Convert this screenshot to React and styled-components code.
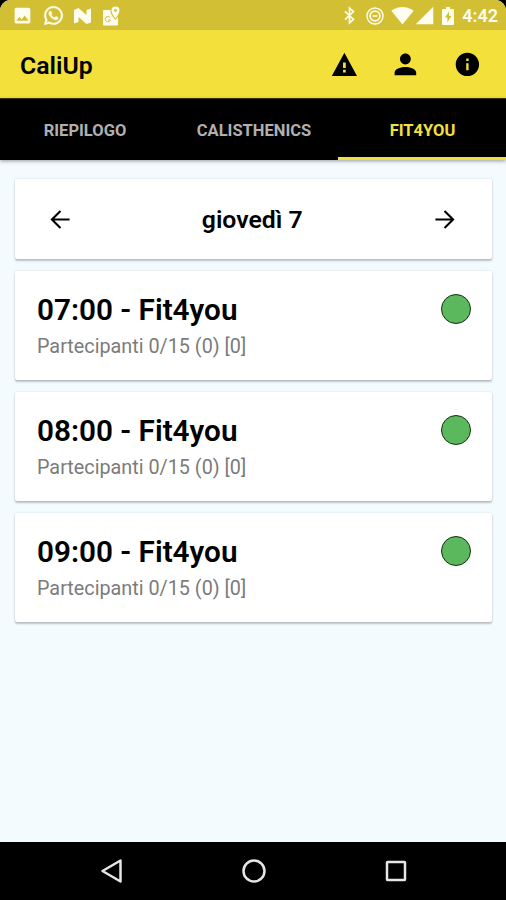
import styled, { createGlobalStyle } from "styled-components";
import {
  IoMdInformationCircle,
  IoMdPerson,
  IoMdWarning,
} from "react-icons/io";
import {
  MdImage,
  MdSignalCellular4Bar,
  MdSignalWifi4Bar,
} from "react-icons/md";
import { FaWhatsapp } from "react-icons/fa";

const tabs = ["Riepilogo", "Calisthenics", "Fit4you"];

const lessons = [
  { time: "07:00", name: "Fit4you", info: "0/15 (0) [0]" },
  { time: "08:00", name: "Fit4you", info: "0/15 (0) [0]" },
  { time: "09:00", name: "Fit4you", info: "0/15 (0) [0]" },
];

export default function App() {
  return (
    <Frame>
      <GlobalStyle />
      <Screen>
        <StatusBar>
          <StatusGroup $gap="9.5px">
            <MdImage size={21} />
            <ChatIcon />
            <NougatIcon />
            <MapsIcon />
          </StatusGroup>
          <StatusGroup $gap="7px">
            <BluetoothIcon />
            <DataSaverIcon />
            <SignalIcons>
              <MdSignalWifi4Bar size={23} />
              <MdSignalCellular4Bar size={21} />
            </SignalIcons>
            <BatteryIcon />
            <Clock>4:42</Clock>
          </StatusGroup>
        </StatusBar>
        <Header>
          <Title>CaliUp</Title>
          <HeaderActions>
            <IoMdWarning />
            <IoMdPerson />
            <IoMdInformationCircle />
          </HeaderActions>
        </Header>
        <Tabs>
          {tabs.map((tab) => (
            <Tab key={tab} $active={tab === "Fit4you"}>
              {tab}
            </Tab>
          ))}
        </Tabs>
        <Content>
          <DayCard>
            <ArrowIcon viewBox="0 0 22 22">
              <path d="M20.5 11H2.5M11 2 2 11l9 9" />
            </ArrowIcon>
            <Day>giovedì 7</Day>
            <ArrowIcon viewBox="0 0 22 22">
              <path d="M1.5 11h18M11 2l9 9-9 9" />
            </ArrowIcon>
          </DayCard>
          {lessons.map((lesson) => (
            <LessonCard key={lesson.time}>
              <div>
                <LessonTitle>
                  {lesson.time} - {lesson.name}
                </LessonTitle>
                <LessonInfo>Partecipanti {lesson.info}</LessonInfo>
              </div>
              <Dot />
            </LessonCard>
          ))}
        </Content>
      </Screen>
      <NavBar>
        <svg width="24" height="28" viewBox="0 0 24 28">
          <path d="M20.5 3.5v21L2.5 14z" />
        </svg>
        <svg width="28" height="28" viewBox="0 0 28 28">
          <circle cx="14" cy="14" r="10.5" />
        </svg>
        <svg width="24" height="28" viewBox="0 0 24 28">
          <rect x="3" y="5" width="18" height="18" rx="0.5" />
        </svg>
      </NavBar>
    </Frame>
  );
}

function NougatIcon() {
  return (
    <svg width="19" height="16" viewBox="0 0 19 16" fill="currentColor">
      <path d="M1 2 5.5 0l8 7V2L18 .5v14L13.5 16l-8-7v5L1 15.5z" />
    </svg>
  );
}

function MapsIcon() {
  return (
    <svg width="18" height="20" viewBox="0 0 18 20" fill="none">
      <path
        fill="currentColor"
        d="M2 4h6.5c-.3 3.5 1.5 6 5 10l2.5-3v7.5a1 1 0 0 1-1 1H2a1 1 0 0 1-1-1V5a1 1 0 0 1 1-1z"
      />
      <path
        fill="currentColor"
        fillRule="evenodd"
        d="M13.5 0.5a4 4 0 0 1 4 4c0 3-4 8-4 8s-4-5-4-8a4 4 0 0 1 4-4zm0 2.6a1.4 1.4 0 1 0 0 2.8 1.4 1.4 0 0 0 0-2.8z"
      />
      <path
        stroke="#d3bf33"
        strokeWidth="1"
        d="M8 11.7A2.6 2.6 0 1 0 8.3 14H6"
      />
    </svg>
  );
}

function BluetoothIcon() {
  return (
    <svg width="19" height="19" viewBox="0 0 19 19" fill="none" stroke="currentColor">
      <path strokeWidth="1.7" d="m5 5.3 8.5 8.2-4 3.5V2l4 3.5L5 13.7" />
    </svg>
  );
}

function DataSaverIcon() {
  return (
    <svg width="18" height="18" viewBox="0 0 18 18" fill="none" stroke="currentColor">
      <circle cx="9" cy="9" r="8" strokeWidth="1.4" />
      <circle cx="9" cy="9" r="4.9" strokeWidth="1.7" />
      <path d="M6.5 9h5" strokeWidth="1.6" />
    </svg>
  );
}

function BatteryIcon() {
  return (
    <svg width="12" height="18" viewBox="0 0 12 18">
      <path
        fill="currentColor"
        d="M4 0h4v2h3a1 1 0 0 1 1 1v14a1 1 0 0 1-1 1H1a1 1 0 0 1-1-1V3a1 1 0 0 1 1-1h3z"
      />
      <path fill="#d3bf33" d="M7 4.5 3 10.5h2.4V15.5L9.3 9H7z" />
    </svg>
  );
}

const GlobalStyle = createGlobalStyle`
  * {
    box-sizing: border-box;
  }
  body {
    margin: 0;
    background: #000;
    font-family: Roboto, "Liberation Sans", sans-serif;
  }
  svg {
    display: block;
    flex-shrink: 0;
  }
`;

const Frame = styled.div`
  width: 506px;
  height: 900px;
  display: flex;
  flex-direction: column;
  overflow: hidden;
  background: #000;
`;

const Screen = styled.div`
  flex: 1;
  display: flex;
  flex-direction: column;
  overflow: hidden;
  border-radius: 11px 11px 0 0;
  background: #f4fbff;
`;

const StatusBar = styled.div`
  height: 30px;
  padding: 1px 8px 0 12px;
  display: flex;
  align-items: center;
  justify-content: space-between;
  background: #d3bf33;
  color: #fffdf0;
`;

const StatusGroup = styled.div`
  display: flex;
  align-items: center;
  gap: ${(props) => props.$gap};
`;

const ChatIcon = styled(FaWhatsapp)`
  font-size: 21px;
  stroke: currentColor;
  stroke-width: 14;
`;

const SignalIcons = styled.div`
  display: flex;
  align-items: center;
`;

const Clock = styled.span`
  margin-left: 1px;
  font-size: 18px;
  font-weight: 600;
`;

const Header = styled.div`
  height: 69px;
  padding: 0 24px 0 20px;
  display: flex;
  align-items: center;
  justify-content: space-between;
  background: #f3e03b;
  border-bottom: 1px solid #3d390e;
`;

const Title = styled.div`
  padding-top: 3px;
  font-size: 24.8px;
  font-weight: 600;
`;

const HeaderActions = styled.div`
  display: flex;
  gap: 33px;
  font-size: 28.8px;
`;

const Tabs = styled.div`
  height: 61px;
  display: grid;
  grid-template-columns: 169px 169px 168px;
  background: #000;
  box-shadow: 0 1px 4px rgba(0, 0, 0, 0.4);
`;

const Tab = styled.div`
  display: flex;
  align-items: center;
  justify-content: center;
  padding: 4px 0 0 1px;
  border-bottom: 3px solid ${(props) => (props.$active ? "#f3e03b" : "#000")};
  color: ${(props) => (props.$active ? "#f3e03b" : "#b0b0b0")};
  font-size: 16.5px;
  font-weight: 700;
  text-transform: uppercase;
`;

const Content = styled.div`
  padding: 18.5px 14.5px 0 15px;
  display: flex;
  flex-direction: column;
  gap: 12px;
`;

const Card = styled.div`
  display: flex;
  justify-content: space-between;
  background: #fff;
  border-radius: 2px;
  box-shadow: 0 2px 2px rgba(0, 0, 0, 0.22), 0 0 2px rgba(0, 0, 0, 0.15);
`;

const DayCard = styled(Card)`
  height: 80px;
  padding: 1px 36.5px 0 34.5px;
  align-items: center;
`;

const ArrowIcon = styled.svg`
  width: 21px;
  height: 21px;
  fill: none;
  stroke: #000;
  stroke-width: 2.2;
`;

const Day = styled.div`
  padding-top: 1px;
  font-size: 24.8px;
  font-weight: 600;
`;

const LessonCard = styled(Card)`
  height: 109.3px;
  padding: 22px 20.5px 0 22px;
`;

const LessonTitle = styled.div`
  font-size: 29.7px;
  line-height: 34px;
  font-weight: 600;
`;

const LessonInfo = styled.div`
  margin-top: 8px;
  font-size: 19.8px;
  line-height: 24px;
  color: #7b7b7b;
`;

const Dot = styled.div`
  width: 30px;
  height: 30px;
  margin-top: 1px;
  border: 1px solid #10330f;
  border-radius: 50%;
  background: #5cb85c;
`;

const NavBar = styled.div`
  height: 58px;
  padding: 0 98px 0 99.5px;
  display: flex;
  align-items: center;
  justify-content: space-between;
  background: #000;

  svg {
    fill: none;
    stroke: #e6e6e6;
    stroke-width: 2.5;
    stroke-linejoin: round;
  }
`;
